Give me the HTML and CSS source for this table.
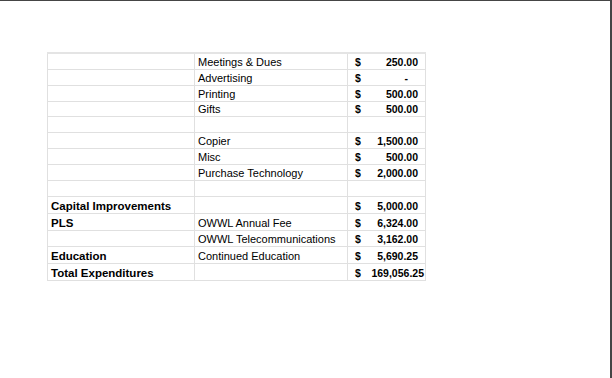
FILE: index.html
```html
<!DOCTYPE html>
<html>
<head>
<meta charset="utf-8">
<link rel="stylesheet" href="styles.css">
</head>
<body>
<div class="page">
  <table class="sheet">
    <colgroup><col class="c1"><col class="c2"><col class="c3"></colgroup>
    <tr><td></td><td>Meetings &amp; Dues</td><td class="amt"><div class="money"><span>$</span><span>250.00</span></div></td></tr>
    <tr><td></td><td>Advertising</td><td class="amt"><div class="money"><span>$</span><span class="dash">-</span></div></td></tr>
    <tr><td></td><td>Printing</td><td class="amt"><div class="money"><span>$</span><span>500.00</span></div></td></tr>
    <tr class="short"><td></td><td>Gifts</td><td class="amt"><div class="money"><span>$</span><span>500.00</span></div></td></tr>
    <tr><td></td><td></td><td></td></tr>
    <tr><td></td><td>Copier</td><td class="amt"><div class="money"><span>$</span><span>1,500.00</span></div></td></tr>
    <tr><td></td><td>Misc</td><td class="amt"><div class="money"><span>$</span><span>500.00</span></div></td></tr>
    <tr><td></td><td>Purchase Technology</td><td class="amt"><div class="money"><span>$</span><span>2,000.00</span></div></td></tr>
    <tr><td></td><td></td><td></td></tr>
    <tr class="tall"><td class="lbl">Capital Improvements</td><td></td><td class="amt"><div class="money"><span>$</span><span>5,000.00</span></div></td></tr>
    <tr class="tall"><td class="lbl">PLS</td><td>OWWL Annual Fee</td><td class="amt"><div class="money"><span>$</span><span>6,324.00</span></div></td></tr>
    <tr><td></td><td>OWWL Telecommunications</td><td class="amt"><div class="money"><span>$</span><span>3,162.00</span></div></td></tr>
    <tr class="tall"><td class="lbl">Education</td><td>Continued Education</td><td class="amt"><div class="money"><span>$</span><span>5,690.25</span></div></td></tr>
    <tr class="tall"><td class="lbl">Total Expenditures</td><td></td><td class="amt total"><div class="money"><span>$</span><span>169,056.25</span></div></td></tr>
  </table>
</div>
</body>
</html>
```

FILE: styles.css
```css
html, body {
  margin: 0;
  padding: 0;
  background: #ffffff;
}

.page {
  box-sizing: border-box;
  width: 612px;
  height: 378px;
  border-top: 1px solid #454545;
  border-right: 2px solid #454545;
  padding: 51px 0 0 47px;
  font-family: "Liberation Sans", Arial, sans-serif;
  color: #000;
}

.sheet {
  border-collapse: collapse;
  table-layout: fixed;
  width: 378px;
  border-top: 2px solid #e4e4e4;
}

.c1 { width: 147px; }
.c2 { width: 153px; }
.c3 { width: 78px; }

.sheet tr { height: 16px; }
.sheet tr.short { height: 15px; }
.sheet tr.tall { height: 17px; }

.sheet td {
  border: 1px solid #e0e0e0;
  padding: 0 3px 1px 3px;
  font-size: 11px;
  line-height: 12px;
  vertical-align: bottom;
  white-space: nowrap;
  overflow: visible;
}

.sheet td.lbl {
  font-weight: bold;
  font-size: 11.5px;
}

.sheet td.amt {
  padding: 0 7px 1px 7px;
  font-weight: bold;
  font-size: 10.5px;
}

.money {
  display: flex;
  justify-content: space-between;
}

.money .dash {
  padding-right: 10px;
}

.sheet td.total {
  padding-right: 1px;
}
```
